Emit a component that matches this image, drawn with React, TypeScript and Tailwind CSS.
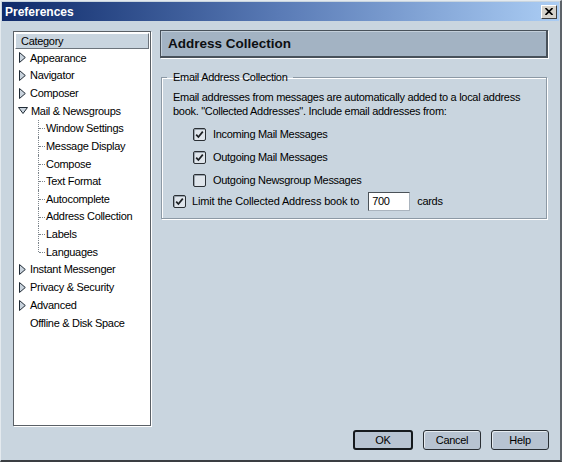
import React from "react";

function TriRight() {
  return (
    <svg width="7" height="11" viewBox="0 0 7 11" className="shrink-0">
      <path d="M0.5 0.5 L6.3 5.5 L0.5 10.5 Z" fill="#c9d3dd" stroke="#1f2a35" strokeWidth="1" />
    </svg>
  );
}

function TriDown() {
  return (
    <svg width="10" height="7" viewBox="0 0 10 7" className="shrink-0">
      <path d="M0.5 0.5 L9.5 0.5 L5 6.5 Z" fill="#c9d3dd" stroke="#1f2a35" strokeWidth="1" />
    </svg>
  );
}

function Check({ checked }: { checked: boolean }) {
  return (
    <span className="w-[13px] h-[13px] shrink-0 rounded-[2px] border border-[#2a2f34] bg-[#dfe5eb] shadow-[inset_1px_1px_0_#9aa4ae] flex items-center justify-center">
      {checked && (
        <svg width="11" height="11" viewBox="0 0 11 11">
          <path d="M2.2 5.6 L4.4 8 L8.8 2.6" stroke="#1b1f23" strokeWidth="1.7" fill="none" />
        </svg>
      )}
    </span>
  );
}

const topItems1 = ["Appearance", "Navigator", "Composer"];
const children = [
  "Window Settings",
  "Message Display",
  "Compose",
  "Text Format",
  "Autocomplete",
  "Address Collection",
  "Labels",
  "Languages",
];
const topItems2 = ["Instant Messenger", "Privacy & Security", "Advanced"];

function TopRow({ label }: { label: string }) {
  return (
    <div className="h-[17.67px] flex items-center pl-[4px] gap-[4px]">
      <TriRight />
      <span>{label}</span>
    </div>
  );
}

export default function App() {
  return (
    <div className="w-[562px] h-[462px] bg-[#c9d5df] border-t border-l border-t-[#e4eaef] border-l-[#e4eaef] border-r-2 border-b-2 border-r-[#5d6369] border-b-[#3a3e42] flex flex-col font-['Liberation_Sans',Arial,sans-serif] text-[11px] tracking-[-0.3px] text-black overflow-hidden">
      {/* title bar */}
      <div className="mx-[1px] mt-[1px] h-[19px] shrink-0 flex items-center justify-between bg-gradient-to-r from-[#0f2a6a] via-[#5a7bb6] to-[#abcdf4] pl-[3px] pr-[2px]">
        <span className="text-white font-bold text-[12px] tracking-normal">Preferences</span>
        <span className="w-[16px] h-[14px] bg-[#d6d3cc] border border-t-white border-l-white border-r-[#404040] border-b-[#404040] flex items-center justify-center">
          <svg width="8" height="7" viewBox="0 0 8 7">
            <path d="M0.5 0 L7.5 7 M7.5 0 L0.5 7" stroke="#000" strokeWidth="1.6" />
          </svg>
        </span>
      </div>

      {/* body */}
      <div className="flex flex-1 min-h-0">
        {/* tree */}
        <div className="ml-[12px] mt-[10px] w-[138px] h-[395px] border border-[#5a6066] bg-white shadow-[1px_1px_0_#fff] pt-[1px] pl-[1px] flex flex-col">
          <div className="h-[16px] w-[134px] bg-[#c9d5df] border border-t-white border-l-white border-r-[#6c747c] border-b-[#6c747c] flex items-center pl-[5px]">
            Category
          </div>
          {topItems1.map((l) => (
            <TopRow key={l} label={l} />
          ))}
          <div className="h-[17.67px] flex items-center pl-[3px] gap-[3px]">
            <TriDown />
            <span>Mail &amp; Newsgroups</span>
          </div>
          {children.map((l, i) => (
            <div key={l} className="h-[17.67px] flex items-center">
              <span className="relative ml-[23px] w-[8px] self-stretch">
                <span
                  className={
                    i === children.length - 1
                      ? "absolute left-0 top-0 h-1/2 border-l border-dotted border-[#7d858c]"
                      : "absolute left-0 top-0 bottom-0 border-l border-dotted border-[#7d858c]"
                  }
                />
                <span className="absolute left-[1px] top-1/2 w-[6px] border-t border-dotted border-[#7d858c]" />
              </span>
              <span>{l}</span>
            </div>
          ))}
          {topItems2.map((l) => (
            <TopRow key={l} label={l} />
          ))}
          <div className="h-[18px] flex items-center pl-[15px]">Offline &amp; Disk Space</div>
        </div>

        {/* right */}
        <div className="ml-[9px] mt-[9px] w-[388px] flex flex-col">
          <div className="h-[28px] bg-[#a3b3c3] border border-[#48515a] border-r-2 border-b-2 shadow-[inset_1px_1px_0_#c3cfda,1px_1px_0_#fff] flex items-center pl-[7px] pt-[1px]">
            <span className="font-bold text-[13.5px] tracking-normal text-[#0d0f12]">Address Collection</span>
          </div>

          <fieldset className="mt-[12px] ml-[1px] mr-[1px] border border-[#8c99a5] shadow-[1px_1px_0_#fff,inset_1px_1px_0_#fff] px-[11px] pb-[6px]">
            <legend className="ml-[-6px] px-[6px] leading-[14px]">Email Address Collection</legend>
            <p className="mt-[6px] leading-[14px] whitespace-nowrap">
              Email addresses from messages are automatically added to a local address
              <br />
              book. "Collected Addresses". Include email addresses from:
            </p>
            <div className="mt-[5px] h-[23px] flex items-center pl-[20px] gap-[7px]">
              <Check checked />
              <span>Incoming Mail Messages</span>
            </div>
            <div className="h-[23px] flex items-center pl-[20px] gap-[7px]">
              <Check checked />
              <span>Outgoing Mail Messages</span>
            </div>
            <div className="h-[22px] flex items-center pl-[20px] gap-[7px]">
              <Check checked={false} />
              <span>Outgoing Newsgroup Messages</span>
            </div>
            <div className="h-[21px] flex items-center gap-[6px]">
              <Check checked />
              <span className="tracking-[-0.15px]">Limit the Collected Address book to</span>
              <span className="ml-[3px] w-[42px] h-[19px] bg-white border border-t-[#4b5258] border-l-[#4b5258] border-r-[#aab4be] border-b-[#aab4be] flex items-center pl-[3px]">
                700
              </span>
              <span className="ml-[1px]">cards</span>
            </div>
          </fieldset>
        </div>
      </div>

      {/* buttons */}
      <div className="h-[20px] mb-[10px] mt-[4px] shrink-0 flex justify-end pr-[11px] gap-[10px]">
        <button className="w-[60px] h-[20px] bg-[#b7c3d1] border-2 border-[#15191d] rounded-[3px] flex items-center justify-center">
          OK
        </button>
        <button className="w-[58px] h-[20px] bg-[#b7c3d1] border border-[#2a2f34] rounded-[3px] shadow-[inset_1px_1px_0_#e6ecf1] flex items-center justify-center">
          Cancel
        </button>
        <button className="w-[58px] h-[20px] bg-[#b7c3d1] border border-[#2a2f34] rounded-[3px] shadow-[inset_1px_1px_0_#e6ecf1] flex items-center justify-center">
          Help
        </button>
      </div>
    </div>
  );
}
